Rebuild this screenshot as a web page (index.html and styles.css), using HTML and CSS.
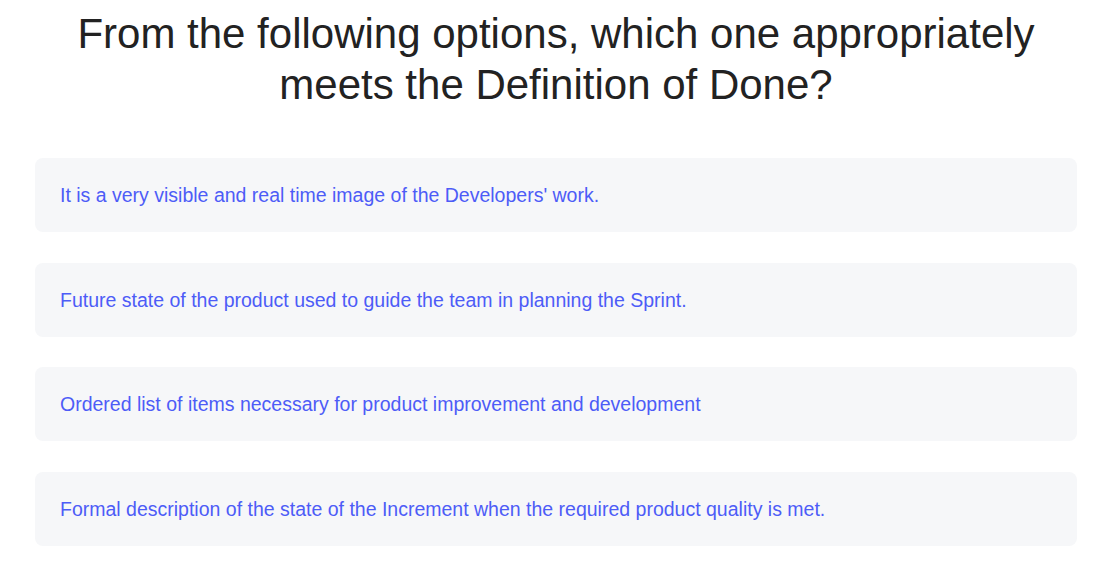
FILE: index.html
```html
<!DOCTYPE html>
<html lang="en">
<head>
<meta charset="utf-8">
<title>Quiz</title>
<link rel="stylesheet" href="styles.css">
</head>
<body>
<main class="quiz">
  <h1 class="question">From the following options, which one appropriately meets the Definition of Done?</h1>
  <ul class="options">
    <li class="option">It is a very visible and real time image of the Developers' work.</li>
    <li class="option">Future state of the product used to guide the team in planning the Sprint.</li>
    <li class="option">Ordered list of items necessary for product improvement and development</li>
    <li class="option">Formal description of the state of the Increment when the required product quality is met.</li>
  </ul>
</main>
</body>
</html>
```
FILE: styles.css
```css
* { box-sizing: border-box; }
html, body { margin: 0; padding: 0; background: #ffffff; }
body { font-family: "Liberation Sans", Arial, sans-serif; }
.quiz { padding: 8px 19px 0 35px; }
.question {
  margin: 0 0 48px;
  font-size: 42px;
  line-height: 51px;
  font-weight: 400;
  color: #222222;
  text-align: center;
  padding: 0 30px;
}
.options {
  list-style: none;
  margin: 0;
  padding: 0;
  display: flex;
  flex-direction: column;
  gap: 30.6px;
}
.option {
  background: #f6f7f9;
  border-radius: 8px;
  padding: 25px 25px;
  font-size: 19.5px;
  line-height: 24px;
  color: #4d5cf7;
}
```
